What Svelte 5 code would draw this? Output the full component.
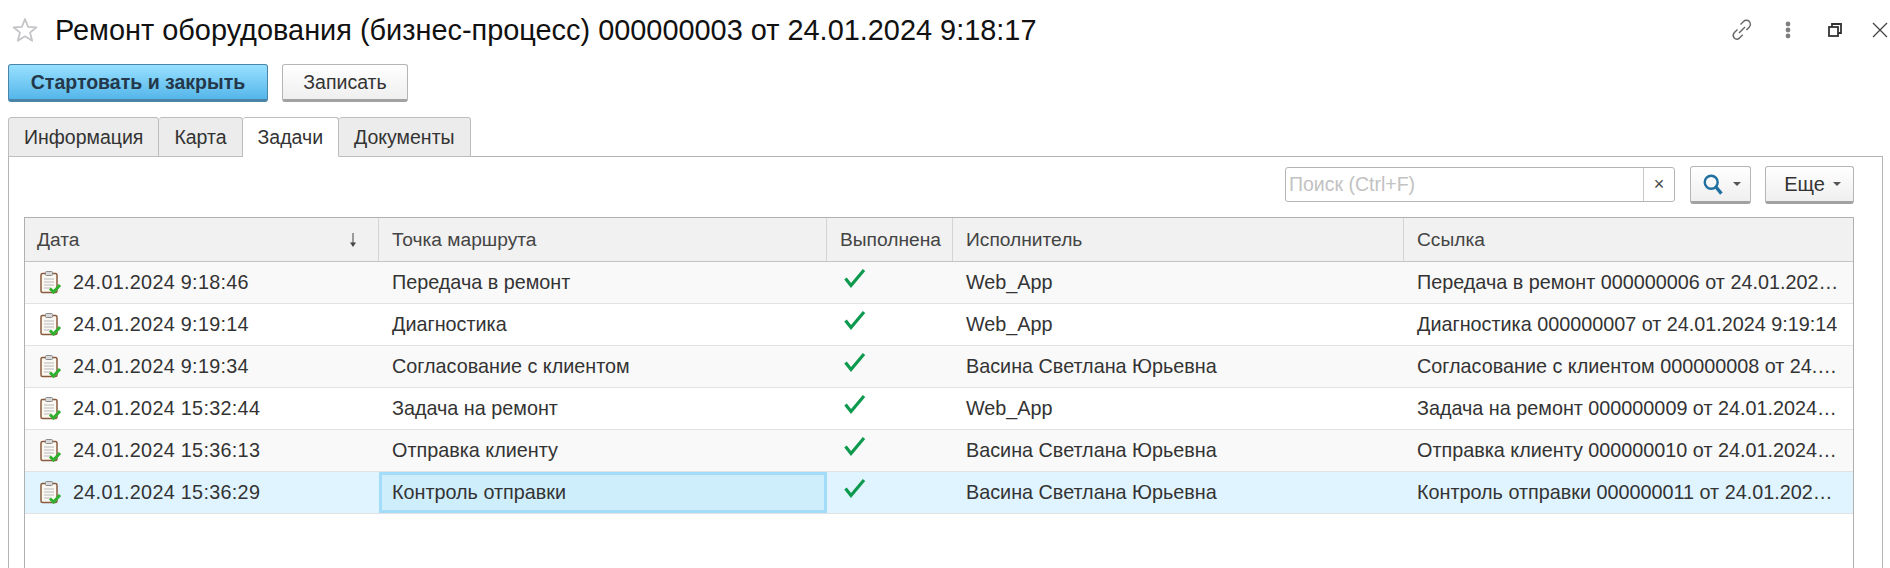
<script lang="ts">
  const rows = [
    { date: '24.01.2024 9:18:46', point: 'Передача в ремонт', user: 'Web_App', link: 'Передача в ремонт 000000006 от 24.01.2024 9:18:46' },
    { date: '24.01.2024 9:19:14', point: 'Диагностика', user: 'Web_App', link: 'Диагностика 000000007 от 24.01.2024 9:19:14' },
    { date: '24.01.2024 9:19:34', point: 'Согласование с клиентом', user: 'Васина Светлана Юрьевна', link: 'Согласование с клиентом 000000008 от 24.01.2024 9:19:34' },
    { date: '24.01.2024 15:32:44', point: 'Задача на ремонт', user: 'Web_App', link: 'Задача на ремонт 000000009 от 24.01.2024 15:32:44' },
    { date: '24.01.2024 15:36:13', point: 'Отправка клиенту', user: 'Васина Светлана Юрьевна', link: 'Отправка клиенту 000000010 от 24.01.2024 15:36:13' },
    { date: '24.01.2024 15:36:29', point: 'Контроль отправки', user: 'Васина Светлана Юрьевна', link: 'Контроль отправки 000000011 от 24.01.2024 15:36:29' }
  ];
  const tabs = ['Информация', 'Карта', 'Задачи', 'Документы'];
</script>

<div class="page">
  <header class="title-bar">
    <svg class="star" width="26" height="26" viewBox="0 0 26 26">
      <path d="M13 2l3.1 7.8 8.4.5-6.5 5.3 2.2 8.2-7.2-4.5-7.2 4.5 2.2-8.2-6.5-5.3 8.4-.5z" fill="#fff" stroke="#c4c4c8" stroke-width="1.8" stroke-linejoin="round"/>
    </svg>
    <h1>Ремонт оборудования (бизнес-процесс) 000000003 от 24.01.2024 9:18:17</h1>
    <div class="win-icons">
      <svg width="24" height="24" viewBox="0 0 24 24" fill="none" stroke="#666" stroke-width="1.4">
        <path d="M10.5 6.5l3-3a4 4 0 0 1 6.5 1 4 4 0 0 1-.6 4.4l-3 3"/>
        <path d="M7.5 11.5l-3.3 3.3a4 4 0 0 0-.2 5 4 4 0 0 0 5.5.3l3.2-3.3"/>
        <path d="M9 15l6-6"/>
      </svg>
      <svg width="8" height="20" viewBox="0 0 8 20" fill="#808080">
        <circle cx="4" cy="4" r="2.4"/><circle cx="4" cy="10" r="2.4"/><circle cx="4" cy="16" r="2.4"/>
      </svg>
      <svg class="restore" width="16" height="16" viewBox="0 0 16 16" fill="none" stroke="#333" stroke-width="1.8">
        <rect x="2" y="5" width="9" height="9"/><path d="M5 5V2h9v9h-3"/>
      </svg>
      <svg class="close" width="16" height="16" viewBox="0 0 16 16" fill="none" stroke="#444" stroke-width="1.3">
        <path d="M1 1l14 14M15 1L1 15"/>
      </svg>
    </div>
  </header>

  <div class="actions">
    <button class="btn primary">Стартовать и закрыть</button>
    <button class="btn save">Записать</button>
  </div>

  <nav class="tabs">
    {#each tabs as tab}
      <div class="tab" class:active={tab === 'Задачи'}>{tab}</div>
    {/each}
  </nav>

  <section class="panel">
    <div class="toolbar">
      <div class="search">
        <span class="placeholder">Поиск (Ctrl+F)</span>
        <span class="clear">×</span>
      </div>
      <button class="btn tool find">
        <svg width="24" height="24" viewBox="0 0 20 20" fill="none" stroke="#1f6f9f">
          <circle cx="8.5" cy="8.5" r="5.4" stroke-width="2"/>
          <path d="M12.5 12.5l4.5 5.5" stroke-width="2.8"/>
        </svg>
        <i class="caret"></i>
      </button>
      <button class="btn tool more">Еще <i class="caret"></i></button>
    </div>

    <div class="table">
      <div class="row head">
        <div class="cell date-head">Дата
          <svg width="10" height="16" viewBox="0 0 10 16" fill="#444"><path d="M4.5 1h1v10h-1z"/><path d="M2 10.5h6L5 15z"/></svg>
        </div>
        <div class="cell">Точка маршрута</div>
        <div class="cell">Выполнена</div>
        <div class="cell">Исполнитель</div>
        <div class="cell">Ссылка</div>
      </div>
      {#each rows as row, i}
        <div class="row" class:odd={i % 2 === 0} class:selected={i === rows.length - 1}>
          <div class="cell date">
            <svg width="22" height="26" viewBox="0 0 22 26">
              <rect x="1" y="3.5" width="16" height="19" rx="1.5" fill="#fbf8f2" stroke="#8a5a3c" stroke-width="1.5"/>
              <rect x="5.5" y="1.5" width="7" height="4" rx="1" fill="#d8d8d8" stroke="#8a8a8a"/>
              <path d="M4 9h10M4 12h10M4 15h10M4 18h7" stroke="#b4b8bc"/>
              <path d="M10 18.5l3.5 3.5 6.5-7" fill="none" stroke="#2fb02f" stroke-width="3"/>
            </svg>
            <span>{row.date}</span>
          </div>
          <div class="cell" class:focus={i === rows.length - 1}>{row.point}</div>
          <div class="cell done">
            <svg width="24" height="22" viewBox="0 0 24 22" fill="none" stroke="#0d9a4f" stroke-width="3.2">
              <path d="M2.5 10.5L8 17.5 21 2"/>
            </svg>
          </div>
          <div class="cell">{row.user}</div>
          <div class="cell link">{row.link}</div>
        </div>
      {/each}
    </div>
  </section>
</div>

<style>
  :global(body) {
    margin: 0;
    background: #fff;
  }

  .page {
    height: 568px;
    overflow: hidden;
    display: flex;
    flex-direction: column;
    padding: 0 8px;
    box-sizing: border-box;
    font-family: "Liberation Sans", Arial, sans-serif;
    color: #333;
  }

  .title-bar {
    flex: none;
    height: 64px;
    display: flex;
    align-items: center;
    gap: 17px;
    padding: 0 0 4px 4px;
    box-sizing: border-box;
  }

  h1 {
    margin: 0;
    font-size: 28.9px;
    font-weight: 400;
    color: #111;
    white-space: nowrap;
  }

  .win-icons {
    margin-left: auto;
    display: flex;
    align-items: center;
    gap: 30px;
    margin-right: -6px;
  }

  .restore {
    margin-left: 5px;
  }

  .close {
    margin-left: -1px;
  }

  .actions {
    flex: none;
    display: flex;
    gap: 14px;
    height: 38px;
  }

  .btn {
    font: inherit;
    font-size: 19.5px;
    color: #333;
    border: 1px solid #b5b5b5;
    border-bottom: 3px solid #a2a2a2;
    border-radius: 3px;
    background: linear-gradient(#ffffff, #efefef);
    padding: 0;
    box-sizing: border-box;
  }

  .primary {
    width: 260px;
    font-weight: 700;
    color: #24384a;
    border-color: #4a85a8;
    background: linear-gradient(#98e0ff, #55b6ea);
  }

  .save {
    width: 126px;
  }

  .tabs {
    display: flex;
    margin-top: 15px;
    height: 40px;
    flex: none;
    position: relative;
    z-index: 1;
  }

  .tab {
    display: flex;
    align-items: center;
    padding: 0 15px;
    font-size: 19.5px;
    background: #ececec;
    border: 1px solid #bdbdbd;
    border-left-width: 0;
    border-radius: 3px 3px 0 0;
    box-sizing: border-box;
  }

  .tab:first-child {
    border-left-width: 1px;
  }

  .tab.active {
    background: #fff;
    border-bottom-color: #fff;
  }

  .panel {
    flex: 1;
    min-height: 0;
    margin-top: -1px;
    margin-right: -1px;
    border: 1px solid #b5b5b5;
    border-bottom: 0;
    padding: 0 28px 0 15px;
  }

  .toolbar {
    display: flex;
    justify-content: flex-end;
    align-items: flex-start;
    height: 60px;
    box-sizing: border-box;
    padding-top: 9px;
    gap: 14px;
  }

  .search {
    width: 390px;
    height: 35px;
    margin: 1px 1px 0 0;
    display: flex;
    border: 1px solid #b5b5b5;
    border-radius: 3px;
    box-sizing: border-box;
  }

  .placeholder {
    flex: 1;
    padding-left: 3px;
    font-size: 19.5px;
    line-height: 32px;
    color: #c2c2c2;
    border-right: 1px solid #c8c8c8;
  }

  .clear {
    width: 30px;
    text-align: center;
    line-height: 32px;
    font-size: 18px;
    color: #444;
  }

  .tool {
    height: 38px;
    display: flex;
    align-items: center;
    justify-content: center;
    gap: 8px;
  }

  .find {
    width: 61px;
  }

  .more {
    width: 89px;
    font-size: 20px;
    padding-left: 6px;
  }

  .caret {
    width: 0;
    height: 0;
    border: 4px solid transparent;
    border-top-color: #555;
    border-bottom-width: 0;
  }

  .table {
    border: 1px solid #b0b0b0;
    border-bottom: 0;
    height: 400px;
  }

  .row {
    display: grid;
    grid-template-columns: 354px 448px 126px 451px 1fr;
    height: 42px;
    box-sizing: border-box;
    border-bottom: 1px solid #e2e2e2;
    font-size: 19.8px;
  }

  .row.odd {
    background: #f9f9f9;
  }

  .row.selected {
    background: #e0f4ff;
  }

  .row.head {
    height: 44px;
    font-size: 19.2px;
    background: #f1f1f1;
    border-bottom: 1px solid #c4c4c4;
    color: #444;
  }

  .cell {
    display: flex;
    align-items: center;
    padding: 0 13px;
    box-sizing: border-box;
    min-width: 0;
    white-space: nowrap;
  }

  .head .cell {
    border-right: 1px solid #d4d4d4;
  }

  .head .cell:last-child {
    border-right: 0;
  }

  .head .cell:first-child {
    padding-left: 12px;
  }

  .date-head {
    justify-content: space-between;
    padding-right: 20px;
  }

  .date {
    gap: 11px;
    padding-left: 15px;
    letter-spacing: 0.3px;
  }

  .done {
    justify-content: flex-start;
    padding: 0 0 8px 16px;
  }

  .link {
    display: block;
    line-height: 41px;
    overflow: hidden;
    text-overflow: ellipsis;
  }

  .focus {
    background: #cfeefc;
    border: 3px solid #a3dcf8;
    padding-left: 10px;
  }
</style>
